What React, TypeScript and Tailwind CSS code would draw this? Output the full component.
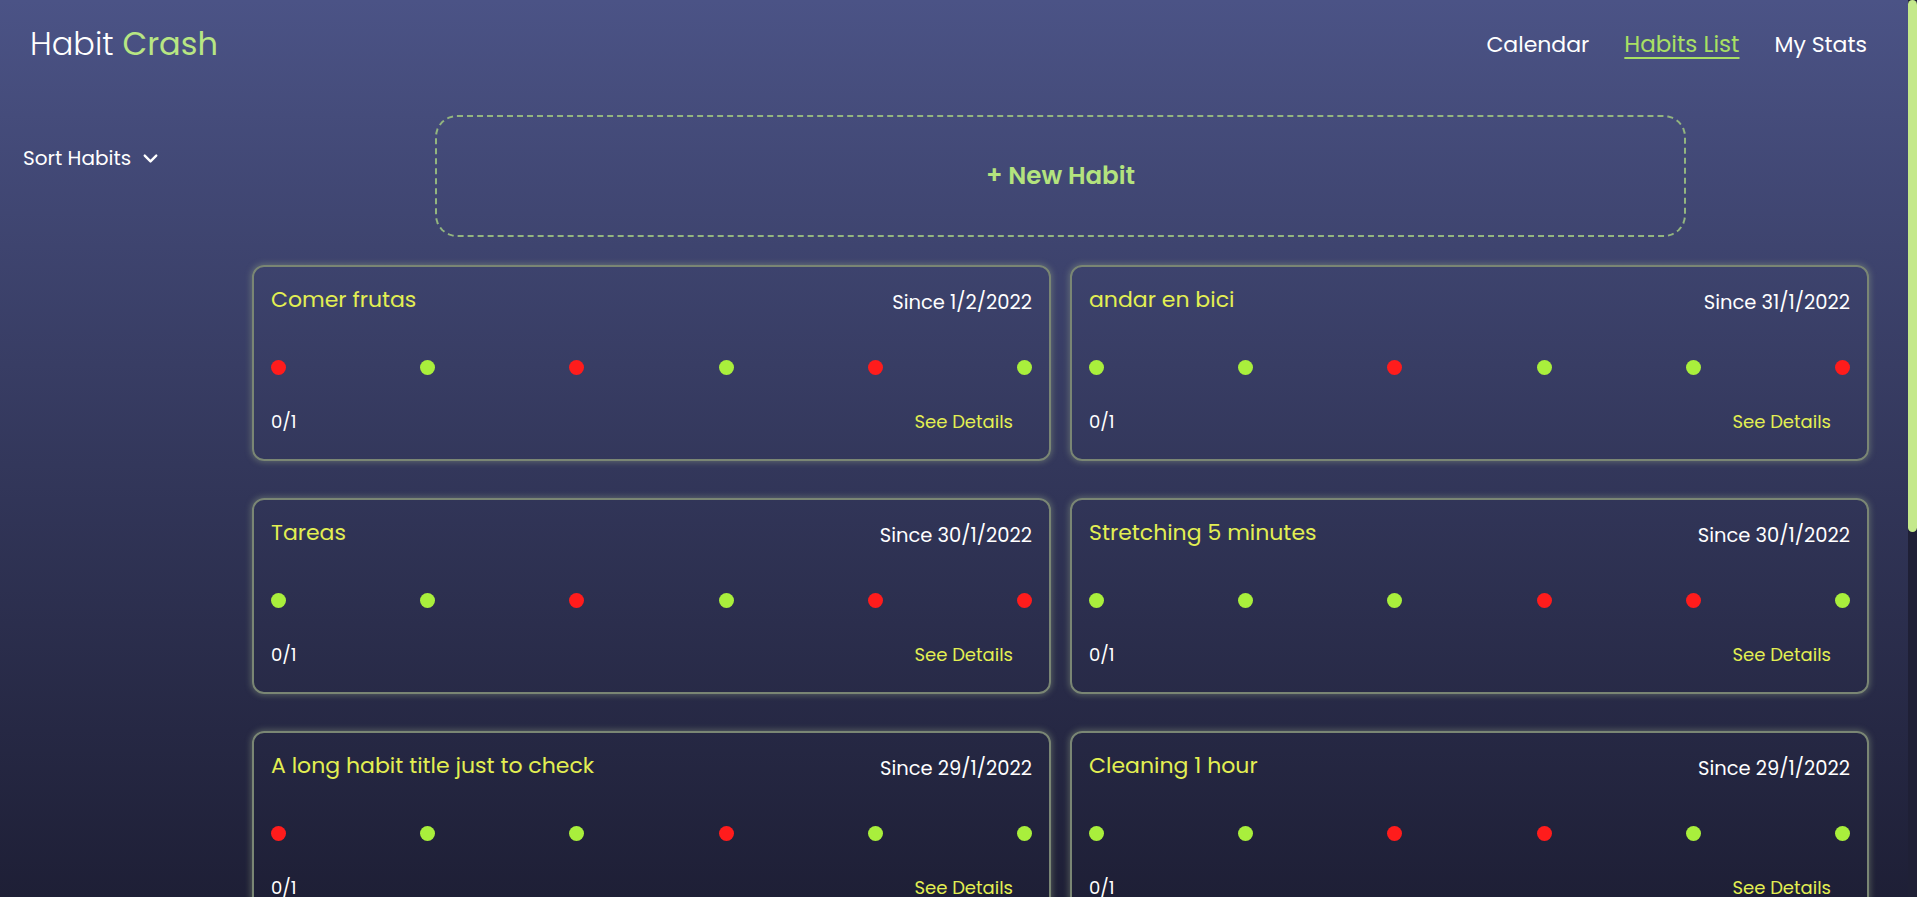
import { ChevronDown } from 'lucide-react';

type Habit = {
  title: string;
  since: string;
  days: boolean[];
};

const habits: Habit[] = [
  { title: 'Comer frutas', since: '1/2/2022', days: [false, true, false, true, false, true] },
  { title: 'andar en bici', since: '31/1/2022', days: [true, true, false, true, true, false] },
  { title: 'Tareas', since: '30/1/2022', days: [true, true, false, true, false, false] },
  { title: 'Stretching 5 minutes', since: '30/1/2022', days: [true, true, true, false, false, true] },
  { title: 'A long habit title just to check', since: '29/1/2022', days: [false, true, true, false, true, true] },
  { title: 'Cleaning 1 hour', since: '29/1/2022', days: [true, true, false, false, true, true] },
  { title: 'Leer 20 páginas', since: '28/1/2022', days: [true, false, true, true, false, true] },
  { title: 'Meditar', since: '27/1/2022', days: [false, true, true, true, false, true] },
];

function HabitCard({ habit }: { habit: Habit }) {
  return (
    <div className="h-[196px] rounded-[12px] border-2 border-[#7a8674] shadow-[0_0_6px_1px_rgba(160,180,140,0.4)] px-[17px] pt-[19px] flex flex-col">
      {/* titulo + fecha */}
      <div className="flex justify-between items-start h-[31px]">
        <span className="text-[22px] leading-[28px] text-[#e3ef52]">{habit.title}</span>
        <span className="mt-[3px] text-[19.5px] leading-[28px] text-white">Since {habit.since}</span>
      </div>

      {/* ultimos dias */}
      <div className="mt-[43px] flex justify-between">
        {habit.days.map((done, i) => (
          <span
            key={i}
            className={`h-[15px] w-[15px] rounded-full ${done ? 'bg-[#a9ef3c]' : 'bg-[#ff1c1c]'}`}
          />
        ))}
      </div>

      <div className="mt-[32px] flex justify-between items-center h-[28px]">
        <span className="text-[18px] text-white">0/1</span>
        <button className="pr-[19px] text-[18px] text-[#e3ef52]">See Details</button>
      </div>
    </div>
  );
}

export default function App() {
  return (
    <div className="flex h-[897px] w-full overflow-hidden bg-gradient-to-b from-[#4b5386] to-[#1e1f36] font-['Poppins','Inter',sans-serif]">
      <div className="flex-1 overflow-hidden">
        {/* HEADER */}
        <header className="h-[88px] flex justify-between items-center pl-[30px] pr-[41px]">
          <a href="#" className="text-[32px] font-light text-white">
            Habit <span className="font-normal text-[#b8e683]">Crash</span>
          </a>
          <nav className="flex items-center gap-[35px] text-[22px] text-white">
            <a href="#">Calendar</a>
            <a href="#" className="text-[23px] text-[#a9e064] underline underline-offset-[5px] decoration-[2px]">
              Habits List
            </a>
            <a href="#">My Stats</a>
          </nav>
        </header>

        <div className="flex pb-[112px]">
          {/* SIDEBAR */}
          <aside className="w-[252px] shrink-0 pl-[23px] pt-[55px]">
            <button className="flex items-center gap-[8px] text-[20px] text-white">
              Sort Habits
              <ChevronDown size={23} strokeWidth={2.5} />
            </button>
          </aside>

          {/* LISTA */}
          <main className="flex-1 pr-[39px] pt-[27px]">
            <button className="mx-auto flex h-[122px] w-[1251px] items-center justify-center rounded-[22px] border-2 border-dashed border-[#93b57f] text-[24.5px] font-semibold text-[#b4e37e]">
              + New Habit
            </button>

            <div className="mt-[28px] grid grid-cols-2 gap-x-[19px] gap-y-[37px]">
              {habits.map((habit) => (
                <HabitCard key={habit.title} habit={habit} />
              ))}
            </div>
          </main>
        </div>
      </div>

      {/* barra de scroll */}
      <div className="w-[9px] shrink-0 bg-[#1f2036]">
        <div className="h-[532px] rounded-full bg-[#c4e98b]" />
      </div>
    </div>
  );
}
